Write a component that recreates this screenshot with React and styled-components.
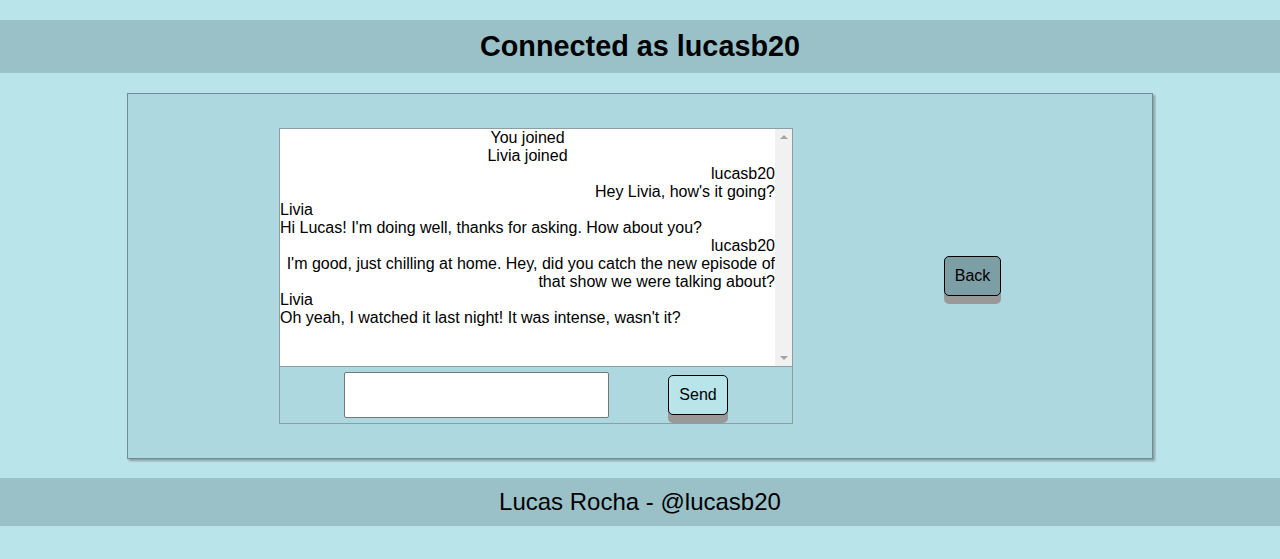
import React from "react";
import styled, { createGlobalStyle } from "styled-components";

const GlobalStyle = createGlobalStyle`
    body {
        margin: 0;
        background-color: #b8e4ea;
        font-family: "Liberation Sans", Arial, sans-serif;
        color: #000;
    }
`;

const Page = styled.div`
    display: flex;
    flex-direction: column;
    align-items: center;
    padding-top: 20px;
    gap: 20px;
`;

const Header = styled.header`
    width: 100%;
    height: 53px;
    background-color: #9ac0c8;
    display: flex;
    align-items: center;
    justify-content: center;
`;

const Title = styled.h1`
    margin: 0;
    font-size: 28.8px;
    font-weight: bold;
`;

const Panel = styled.main`
    width: 80%;
    height: 364px;
    box-sizing: content-box;
    background-color: #aed8df;
    border: 1px solid #6d8e96;
    box-shadow: 2px 2px 2px #8a9da2;
    display: flex;
    align-items: center;
    justify-content: space-evenly;
`;

const ChatBox = styled.div`
    width: 512px;
    border: 1px solid #8a9ea3;
    display: flex;
    flex-direction: column;
`;

const MessageArea = styled.div`
    height: 237px;
    display: flex;
    background-color: #fff;
    border-bottom: 1px solid #8a9ea3;
`;

const Messages = styled.div`
    flex: 1;
    overflow: hidden;
    font-size: 16px;
    line-height: 18px;
`;

const ScrollTrack = styled.div`
    width: 17px;
    background-color: #f1f1f1;
    display: flex;
    flex-direction: column;
    justify-content: space-between;
    align-items: center;
    padding: 6px 0;
`;

const Arrow = styled.div`
    width: 0;
    height: 0;
    border-left: 4px solid transparent;
    border-right: 4px solid transparent;
    ${(props) => props.$up
        ? "border-bottom: 4px solid #a3a3a3;"
        : "border-top: 4px solid #a3a3a3;"}
`;

const Line = styled.div`
    text-align: ${(props) => props.$align};
`;

const InputRow = styled.div`
    height: 56px;
    display: flex;
    align-items: center;
    justify-content: space-between;
    padding: 0 64px;
`;

const TextInput = styled.input`
    width: 265px;
    height: 46px;
    box-sizing: border-box;
    border: 1px solid #767676;
    border-radius: 2px;
    background: #fff;
`;

const Button = styled.button`
    width: ${(props) => props.$width}px;
    height: 40px;
    border: 1px solid #000;
    border-radius: 5px;
    background-color: ${(props) => props.$bg};
    box-shadow: 0 8px 0 #999;
    font-family: "Liberation Sans", Arial, sans-serif;
    font-size: 16px;
    color: #000;
    padding: 0;
    cursor: pointer;
`;

const Footer = styled.footer`
    width: 100%;
    height: 48px;
    margin-top: -1px;
    background-color: #9ac0c8;
    display: flex;
    align-items: center;
    justify-content: center;
    font-size: 24px;
`;

const messages = [
    { text: "You joined", align: "center" },
    { text: "Livia joined", align: "center" },
    { text: "lucasb20", align: "right" },
    { text: "Hey Livia, how's it going?", align: "right" },
    { text: "Livia", align: "left" },
    { text: "Hi Lucas! I'm doing well, thanks for asking. How about you?", align: "left" },
    { text: "lucasb20", align: "right" },
    { text: "I'm good, just chilling at home. Hey, did you catch the new episode of that show we were talking about?", align: "right" },
    { text: "Livia", align: "left" },
    { text: "Oh yeah, I watched it last night! It was intense, wasn't it?", align: "left" },
];

const App = () => {
    return (
        <Page>
            <GlobalStyle />
            <Header>
                <Title>Connected as lucasb20</Title>
            </Header>
            <Panel>
                <ChatBox>
                    <MessageArea>
                        <Messages>
                            {messages.map((m, i) => (
                                <Line key={i} $align={m.align}>{m.text}</Line>
                            ))}
                        </Messages>
                        <ScrollTrack>
                            <Arrow $up />
                            <Arrow />
                        </ScrollTrack>
                    </MessageArea>
                    <InputRow>
                        <TextInput type="text" />
                        <Button $width={60} $bg="#b8e4ea">Send</Button>
                    </InputRow>
                </ChatBox>
                <Button $width={57} $bg="#7c9ea5">Back</Button>
            </Panel>
            <Footer>Lucas Rocha - @lucasb20</Footer>
        </Page>
    );
};

export default App;
